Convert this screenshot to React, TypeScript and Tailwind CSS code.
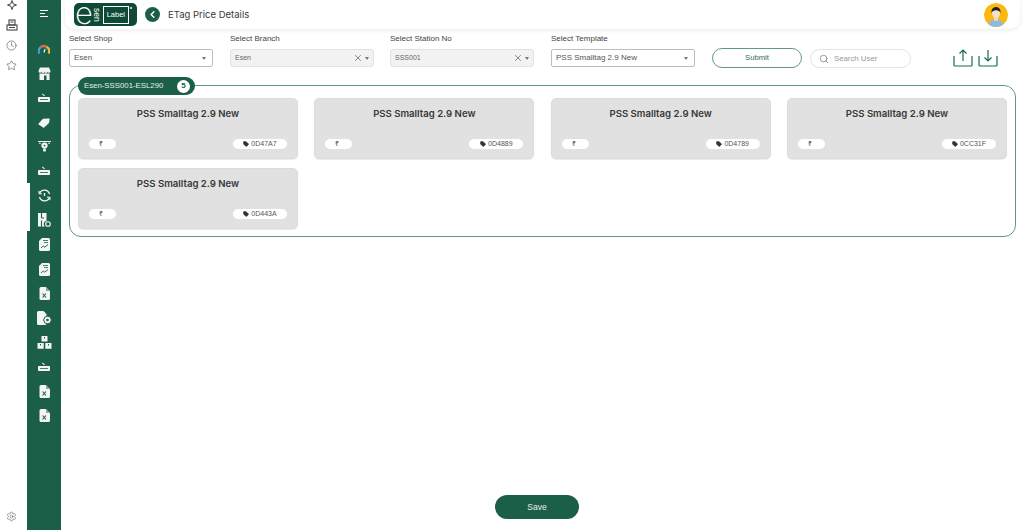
import React from 'react';
import { ChevronLeft, Clock, Star, Settings, Search, X, Tag } from 'lucide-react';

const SANS = "font-['Liberation_Sans',Arial,sans-serif]";
const TITLE = "font-['Inter','Noto_Sans',sans-serif]";

/* ── Sidebar glyphs ───────────────────────────────────── */
function Printer() {
  return (
    <svg width="14" height="12" viewBox="0 0 14 12" fill="#f4f4f4">
      <path d="M5.5 1.5 8 3.6 7.4 4.3 4.9 2.2z" />
      <rect x="1" y="5" width="12" height="5" rx="1" />
      <rect x="3" y="7" width="8" height="0.8" fill="#1c5f48" />
    </svg>
  );
}

function ExcelDoc() {
  return (
    <svg width="11" height="13" viewBox="0 0 11 13">
      <path d="M2 0h5l4 4v7.5a1.5 1.5 0 0 1-1.5 1.5h-7.5A1.5 1.5 0 0 1 .5 11.5V1.5A1.5 1.5 0 0 1 2 0z" fill="#f4f4f4" />
      <path d="M7 0v4h4z" fill="#1c5f48" opacity="0.5" />
      <path d="M3.6 6.5 7 10.5M7 6.5l-3.4 4" stroke="#1c5f48" strokeWidth="1.1" />
    </svg>
  );
}

function ChartDoc() {
  return (
    <svg width="11" height="13" viewBox="0 0 11 13">
      <path d="M3 0h6.5A1.5 1.5 0 0 1 11 1.5v10A1.5 1.5 0 0 1 9.500 13h-8A1.5 1.500 0 0 1 0 11.500V3z" fill="#f4f4f4" />
      <path d="M2 10l2.200-2 1.600 1.200L9 6.500" stroke="#1c5f48" strokeWidth="0.9" fill="none" />
      <path d="M4 2.500h5M5 4.500h4" stroke="#1c5f48" strokeWidth="0.8" />
    </svg>
  );
}

function Gauge() {
  return (
    <svg width="12" height="10" viewBox="0 0 12 10" fill="none" strokeWidth="2.4">
      <path d="M1.300 9.500A4.800 4.800 0 0 1 3 3" stroke="#3fa7d6" />
      <path d="M3 3A4.800 4.800 0 0 1 8.500 2.800" stroke="#e8663d" />
      <path d="M8.500 2.800A4.800 4.800 0 0 1 10.700 9.500" stroke="#e9b949" />
      <path d="M6 8.500 7 5" stroke="#f4f4f4" strokeWidth="1.200" />
    </svg>
  );
}

function Shop() {
  return (
    <svg width="13" height="13" viewBox="0 0 13 13" fill="#f4f4f4">
      <path d="M2 .5h9l1.500 3.500a1.500 1.500 0 0 1-3 .5 1.500 1.500 0 0 1-3 0 1.500 1.500 0 0 1-3 0 1.500 1.500 0 0 1-3-.5z" />
      <path d="M1.500 6.500h10V13h-3V8.500h-2.500V13h-4.500z" />
    </svg>
  );
}

function TagIcon() {
  return (
    <svg width="12" height="10" viewBox="0 0 12 10" fill="#f4f4f4">
      <path d="M5 .8 11 .5a.7.7 0 0 1 .7.8L11 5 6.200 9.500a.8.8 0 0 1-1.100 0L.6 6.500a.6.6 0 0 1 0-.9z" />
    </svg>
  );
}

function Bulb() {
  return (
    <svg width="13" height="11" viewBox="0 0 14 12" fill="#f4f4f4">
      <path d="M0 0h14v1H0zM1 2h2v1H1zM11 2h2v1h-2z" />
      <circle cx="7" cy="5" r="3.400" />
      <rect x="5.500" y="8.800" width="3" height="2.600" />
      <circle cx="7" cy="5" r="1" fill="#1c5f48" />
    </svg>
  );
}

function SyncClock() {
  return (
    <svg width="13" height="13" viewBox="0 0 13 13" fill="none" stroke="#f4f4f4" strokeWidth="1.300">
      <path d="M1.500 4.500A5.300 5.300 0 0 1 11.500 5" />
      <path d="M11.500 8.500A5.300 5.300 0 0 1 1.500 8" />
      <path d="M1 1.800v3h3M12 11.200v-3H9" strokeWidth="1" />
      <path d="M6.500 4v3" />
    </svg>
  );
}

function SheetBadge() {
  return (
    <svg width="14" height="14" viewBox="0 0 14 14" fill="#f4f4f4">
      <path d="M1 0h8.500v8a3 3 0 0 0-1.500 5.500H1z" />
      <path d="M4.500 0v5M4.500 7.500v6M4.500 5H7" stroke="#1c5f48" strokeWidth="1.100" />
      <circle cx="11" cy="11" r="2.300" fill="none" stroke="#f4f4f4" strokeWidth="1.100" />
    </svg>
  );
}

function DocGear() {
  return (
    <svg width="15" height="14" viewBox="0 0 15 14">
      <path d="M1.500 0h5l3 3v9.500A1.500 1.500 0 0 1 8 14H1.500A1.500 1.500 0 0 1 0 12.500v-11A1.500 1.500 0 0 1 1.500 0z" fill="#f4f4f4" />
      <circle cx="10.500" cy="9" r="3.800" fill="#f4f4f4" stroke="#1c5f48" />
      <circle cx="10.500" cy="9" r="1.300" fill="#1c5f48" />
    </svg>
  );
}

function Boxes() {
  return (
    <svg width="15" height="13" viewBox="0 0 15 13" fill="#f4f4f4">
      <rect x="4.500" y="0" width="6" height="5.600" rx="0.600" />
      <rect x="0.500" y="7" width="6.200" height="5.800" rx="0.600" />
      <rect x="8.300" y="7" width="6.200" height="5.800" rx="0.600" />
      <path d="M7 1v1.500h1V1zM3 8v1.500h1V8zM11 8v1.500h1V8z" fill="#1c5f48" />
    </svg>
  );
}

const NAV_ICONS = [
  <Gauge />,
  <Shop />,
  <Printer />,
  <TagIcon />,
  <Bulb />,
  <Printer />,
  <SyncClock />,
  <SheetBadge />,
  <ChartDoc />,
  <ChartDoc />,
  <ExcelDoc />,
  <DocGear />,
  <Boxes />,
  <Printer />,
  <ExcelDoc />,
  <ExcelDoc />,
];

/* ── Small pieces ─────────────────────────────────────── */
function Logo() {
  return (
    <div className="flex h-[23px] w-[63px] items-center rounded-[5px] bg-[#0e4a36] pl-[1px] text-white">
      <span className={`${TITLE} h-[23px] text-[31px] leading-[19px] font-extralight`}>e</span>
      <span className={`${SANS} [writing-mode:vertical-rl] text-[8.500px] leading-[8px]`}>sen</span>
      <span className={`${SANS} ml-[2px] flex h-[18px] w-[26px] items-center justify-center border border-white text-[7.500px]`}>Label</span>
      <span className="mb-[14px] ml-[1px] h-[2px] w-[2px] rounded-full bg-white" />
    </div>
  );
}

function Avatar() {
  return (
    <svg width="24" height="24" viewBox="0 0 24 24" className="rounded-full">
      <circle cx="12" cy="12" r="12" fill="#fbb90f" />
      <path d="M4 22c1-4 4-5.500 8-5.500s7 1.500 8 5.500a12 12 0 0 1-16 0z" fill="#8cbcd6" />
      <rect x="10" y="13" width="4" height="5" fill="#f4d3b5" />
      <ellipse cx="12" cy="10.500" rx="4" ry="4.800" fill="#f8dfc8" />
      <path d="M7.500 10c-.5-4 2-6 4.500-6s5 2 4.500 6c-.8-2-2-2.800-4.500-2.800S8.300 8 7.500 10z" fill="#20201f" />
    </svg>
  );
}

function Caret() {
  return <span className="h-0 w-0 border-x-[2.500px] border-t-[3px] border-x-transparent border-t-[#777]" />;
}

function Field({ label, value, disabled }: { label: string; value: string; disabled?: boolean }) {
  return (
    <div className="w-[144px]">
      <div className={`${SANS} text-[8px] leading-[10px] text-[#444] mb-[5px]`}>{label}</div>
      {disabled ? (
        <div className="flex h-[18px] items-center rounded-[3px] border border-[#e2e2e2] bg-[#f2f2f2] pl-[4px] pr-[4px]">
          <span className={`${SANS} text-[7px] text-[#666] flex-1`}>{value}</span>
          <X size={10} className="text-[#666]" strokeWidth={1.800} />
          <span className="ml-[2px] flex"><Caret /></span>
        </div>
      ) : (
        <div className="flex h-[18px] items-center rounded-[2px] border border-[#bdbdbd] bg-white pl-[4px] pr-[4px]">
          <span className={`${SANS} text-[8px] text-[#555] flex-1`}>{value}</span>
          <span className="mr-[2px] flex"><Caret /></span>
        </div>
      )}
    </div>
  );
}

function TagCard({ code }: { code: string }) {
  return (
    <div className="flex h-[61px] flex-col rounded-[5px] border border-[#dcdcdc] bg-[#e1e1e1] px-[10px] pt-[8px] pb-[9px] shadow-[0_1px_1px_rgba(0,0,0,0.08)]">
      <div className={`${TITLE} text-center text-[9.600px] leading-[14px] font-semibold text-[#383838]`}>PSS Smalltag 2.9 New</div>
      <div className="mt-auto flex items-center justify-between">
        <span className={`${SANS} flex h-[10px] w-[27px] items-center rounded-full bg-white pl-[10px] text-[7px] text-[#444]`}>₹</span>
        <span className={`${SANS} flex h-[10px] w-[54px] items-center justify-center gap-[2px] rounded-full bg-white text-[7px] text-[#555]`}>
          <Tag size={6} className="fill-[#333] text-[#333]" />
          {code}
        </span>
      </div>
    </div>
  );
}

export default function App() {
  const codes = ['0D47A7', '0D4889', '0D4789', '0CC31F', '0D443A'];

  return (
    <div className="flex h-[530px] w-[1024px] overflow-hidden bg-white">
      {/* Browser rail */}
      <div className="flex w-[27px] flex-col items-center pr-[4px] text-[#444]">
        <svg width="12" height="12" viewBox="0 0 12 12" className="mt-[-1px]" fill="none" stroke="#444" strokeWidth="1">
          <path d="M6 1.500 7.200 4.800 10.500 6 7.200 7.200 6 10.500 4.800 7.200 1.500 6 4.800 4.800z" />
        </svg>
        <svg width="12" height="12" viewBox="0 0 12 12" className="mt-[8px]" fill="none" stroke="#444" strokeWidth="1.100">
          <rect x="3" y="1" width="6" height="5" />
          <rect x="1" y="6" width="10" height="5" />
          <path d="M4.500 3h3M3 8.500h6" />
        </svg>
        <Clock size={11} className="mt-[9px]" strokeWidth={1.200} />
        <Star size={11} className="mt-[9px]" strokeWidth={1.200} />
        <Settings size={11} className="mt-auto mb-[8px] text-[#666]" strokeWidth={1.300} />
      </div>

      {/* Sidebar */}
      <div className="relative flex w-[34px] flex-col items-center bg-[#1c5f48]">
        <span className="absolute left-0 top-[183px] h-[48px] w-[3px] bg-white" />
        <div className="mt-[10px] flex flex-col gap-[2px]">
          <span className="h-[1px] w-[8px] bg-white" />
          <span className="h-[1px] w-[5px] bg-white" />
          <span className="h-[1px] w-[8px] bg-white" />
        </div>
        <div className="mt-[20px] flex w-full flex-col items-center">
          {NAV_ICONS.map((icon, i) => (
            <div key={i} className="flex h-[24.450px] w-full items-center justify-center">{icon}</div>
          ))}
        </div>
      </div>

      {/* Main */}
      <div className="flex min-w-0 flex-1 flex-col">
        {/* Header */}
        <div className="ml-[4px] mr-[4px] flex h-[29px] shrink-0 items-center rounded-b-[10px] bg-white pl-[9px] pr-[12px] shadow-[0_1px_5px_rgba(0,0,0,0.09)]">
          <Logo />
          <span className="ml-[8px] flex h-[15px] w-[15px] items-center justify-center rounded-full bg-[#1c5f48]">
            <ChevronLeft size={11} strokeWidth={3.200} className="text-white" />
          </span>
          <span className={`${TITLE} ml-[8px] mt-[1px] text-[9.500px] text-[#3a3a3a]`}>ETag Price Details</span>
          <span className="ml-auto"><Avatar /></span>
        </div>

        {/* Filters */}
        <div className="mt-[5px] flex items-end pl-[8px]">
          <Field label="Select Shop" value="Esen" />
          <div className="w-[17px]" />
          <Field label="Select Branch" value="Esen" disabled />
          <div className="w-[16px]" />
          <Field label="Select Station No" value="SSS001" disabled />
          <div className="w-[17px]" />
          <Field label="Select Template" value="PSS Smalltag 2.9 New" />
          <button className={`${SANS} mb-[-1px] ml-[17px] h-[20px] w-[90px] rounded-full border border-[#5f9a85] bg-white text-[7.700px] text-[#2f6f58]`}>Submit</button>
          <div className="mb-[-1px] ml-[8px] flex h-[19px] w-[101px] items-center rounded-full border border-[#e3e3e3] pl-[8px]">
            <Search size={10} className="text-[#888]" strokeWidth={2} />
            <span className={`${SANS} ml-[5px] text-[7.800px] text-[#999]`}>Search User</span>
          </div>
          <svg width="20" height="18" viewBox="0 0 20 18" className="ml-[42px]" fill="none" stroke="#1c6b50" strokeWidth="1.200">
            <path d="M1 7v9a1 1 0 0 0 1 1h16a1 1 0 0 0 1-1V7" />
            <path d="M10 12V1M6.500 4.500 10 1l3.500 3.500" />
          </svg>
          <svg width="20" height="18" viewBox="0 0 20 18" className="ml-[5px]" fill="none" stroke="#1c6b50" strokeWidth="1.200">
            <path d="M1 7v9a1 1 0 0 0 1 1h16a1 1 0 0 0 1-1V7" />
            <path d="M10 1v11M6.500 8.500 10 12l3.500-3.500" />
          </svg>
        </div>

        {/* Tag group */}
        <div className="relative mt-[18px] ml-[8px] mr-[8px] rounded-[12px] border border-[#5f9a85] pt-[12px] pl-[8px] pr-[8px] pb-[7px]">
          <div className="absolute left-[8px] top-[-9px] flex h-[18px] w-[117px] items-center justify-between rounded-full bg-[#1c5f48] pl-[6px] pr-[5px]">
            <span className={`${SANS} text-[7.800px] text-[#e6efec]`}>Esen-SSS001-ESL290</span>
            <span className={`${SANS} flex h-[13px] w-[13px] items-center justify-center rounded-full bg-white text-[8px] font-bold text-[#1c5f48]`}>5</span>
          </div>
          <div className="grid grid-cols-4 gap-x-[16.300px] gap-y-[9px]">
            {codes.map(code => <TagCard key={code} code={code} />)}
          </div>
        </div>

        {/* Save */}
        <div className="mt-auto mb-[11px] flex justify-center pr-[11px]">
          <button className={`${SANS} h-[24px] w-[84px] rounded-full bg-[#1c5f48] text-[8.500px] text-[#e6efec]`}>Save</button>
        </div>
      </div>
    </div>
  );
}
